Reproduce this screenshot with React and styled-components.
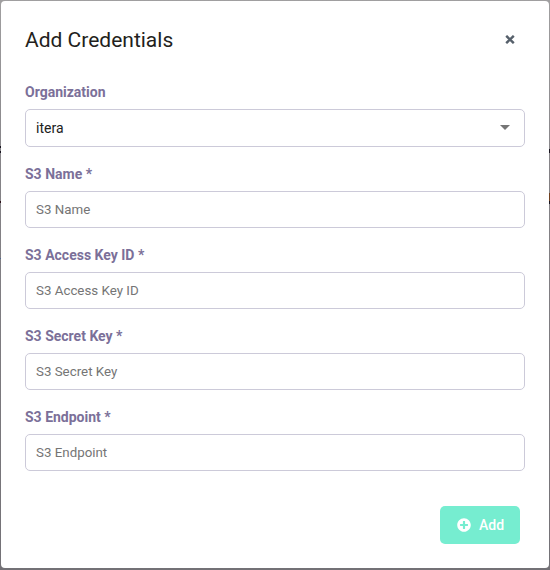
import React from "react";
import styled, { createGlobalStyle } from "styled-components";
import { FaPlusCircle } from "react-icons/fa";

const Global = createGlobalStyle`
  *, *::before, *::after { box-sizing: border-box; }
  body { margin: 0; background: #858387; font-family: Roboto, sans-serif; }
`;
const Backdrop = styled.div`
  height: 570px;
  padding: 1px 1px 2px;
  background:
    linear-gradient(#17131f, #17131f) 0 146px / 1px 2px no-repeat,
    linear-gradient(#17131f, #17131f) 0 151px / 1px 2px no-repeat,
    linear-gradient(#2b1018, #2b1018) 0 201px / 1px 2px no-repeat,
    linear-gradient(#4a6592, #4a6592) 0 258px / 1px 1px no-repeat,
    linear-gradient(#17131f, #17131f) 549px 149px / 1px 4px no-repeat,
    linear-gradient(#70401f, #70401f) 549px 193px / 1px 8px no-repeat,
    linear-gradient(#17131f, #17131f) 549px 201px / 1px 3px no-repeat,
    linear-gradient(#a09fa0, #858387 30%, #737176);
`;
const Dialog = styled.form`
  height: 567px;
  padding: 24px;
  background: #fff;
  border-radius: 4px;
`;
const Header = styled.header`
  display: flex;
  justify-content: space-between;
  height: 30px;
`;
const Title = styled.h2`
  margin: 0;
  font-size: 21px;
  font-weight: 400;
  line-height: 30px;
  color: #231f20;
`;
const Close = styled.button`
  display: flex;
  align-items: center;
  justify-content: center;
  width: 30px;
  height: 29px;
  padding: 0;
  border: 0;
  background: none;
`;
const Fields = styled.div`
  display: flex;
  flex-direction: column;
  gap: 17px;
  padding-top: 27px;
`;
const Field = styled.div`
  display: flex;
  flex-direction: column;
`;
const Label = styled.label`
  height: 27px;
  line-height: 20px;
  font-size: 14px;
  font-weight: 700;
  color: #7b7099;
`;
const Input = styled.input`
  height: 37px;
  padding: 0 10px;
  border: 1px solid #cccad9;
  border-radius: 5px;
  font: 400 13.333px Roboto, sans-serif;
  &::placeholder { color: #757575; opacity: 1; }
`;
const Select = styled.div`
  display: flex;
  align-items: center;
  justify-content: space-between;
  height: 38px;
  padding: 0 14px 0 10px;
  border: 1px solid #cccad9;
  border-radius: 5px;
  font-size: 14px;
  color: #212121;
`;
const Arrow = styled.svg`
  margin-bottom: 1px;
`;
const Footer = styled.footer`
  display: flex;
  justify-content: flex-end;
  padding: 35px 5px 0;
`;
const AddButton = styled.button`
  display: flex;
  align-items: center;
  justify-content: center;
  gap: 8px;
  width: 80px;
  height: 38px;
  padding: 0 0 1px 1px;
  border: 0;
  border-radius: 5px;
  background: #76edd0;
  color: #fff;
  font: 500 14px Roboto, sans-serif;
`;

const names = ["S3 Name", "S3 Access Key ID", "S3 Secret Key", "S3 Endpoint"];

export default function App() {
  return (
    <Backdrop>
      <Global />
      <Dialog>
        <Header>
          <Title>Add Credentials</Title>
          <Close type="button" aria-label="Close">
            <svg width="10" height="9" viewBox="0 0 10 9">
              <path d="M1.2 .8 8.8 8.2M8.8 .8 1.2 8.2" stroke="#56606b" strokeWidth="2.4" />
            </svg>
          </Close>
        </Header>
        <Fields>
          <Field>
            <Label>Organization</Label>
            <Select>
              itera
              <Arrow width="10" height="5" viewBox="0 0 10 5"><path d="M0 0h10L5 5z" fill="#757575" /></Arrow>
            </Select>
          </Field>
          {names.map((name) => (
            <Field key={name}>
              <Label>{name} *</Label>
              <Input placeholder={name} />
            </Field>
          ))}
        </Fields>
        <Footer>
          <AddButton type="button"><FaPlusCircle size={14} />Add</AddButton>
        </Footer>
      </Dialog>
    </Backdrop>
  );
}
